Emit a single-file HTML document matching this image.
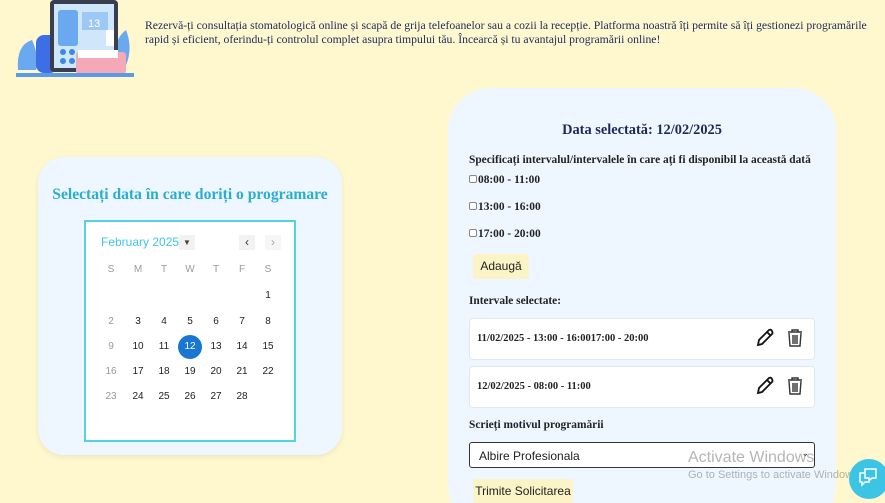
<!DOCTYPE html>
<html style="overflow:hidden;width:885px;height:503px"><head><meta charset="utf-8"><style>
*{box-sizing:border-box;margin:0;padding:0}
body{width:885px;height:503px;overflow:hidden;background:#fff8cf;font-family:"Liberation Serif",serif;position:relative;color:#222}
.abs{position:absolute}
.intro{left:145px;top:19px;width:738px;font-size:11.7px;color:#1c2a5a;line-height:14px}
.lcard{left:38px;top:157px;width:304px;height:298px;background:#eef6ff;border-radius:26px;box-shadow:0 2px 6px rgba(0,0,0,.08)}
.ltitle{left:38px;top:186px;width:304px;text-align:center;font-weight:bold;font-size:15.6px;color:#2aaed0}
.cal{left:84px;top:220px;width:212px;height:222px;background:#fff;border:2px solid #56d0e6;font-family:"Liberation Sans",sans-serif}
.d{position:absolute;width:24px;height:24px;margin-left:-12px;margin-top:-12px;text-align:center;line-height:24px;font-size:10px;color:#222;font-family:"Liberation Sans",sans-serif}
.g{color:#999}
.rcard{left:448px;top:88px;width:388px;height:440px;background:#eef6ff;border-radius:42px}
.b{font-weight:bold}
.item{left:469px;width:346px;height:42px;background:#fff;border:1px solid #e3e8ee;border-radius:4px;font-size:10.5px;font-weight:bold}
.btn{background:#fbf4c6;font-family:"Liberation Sans",sans-serif;font-size:12px;color:#222;text-align:center;border-radius:3px}
.cb{display:inline-block;width:8px;height:8px;border:1px solid #888;border-radius:2px;background:#fff;margin-right:1px;vertical-align:0}
.lab{left:469px;font-size:11.4px;font-weight:bold}
</style></head><body>
<svg class="abs" style="left:14px;top:0" width="122" height="80" viewBox="0 0 122 80">
<path d="M4 70 Q2 45 18 40 Q25 55 22 70Z" fill="#6aa8f0"/>
<path d="M100 70 Q98 40 112 30 Q120 50 110 70Z" fill="#6aa8f0"/>
<rect x="22" y="35" width="22" height="38" rx="8" fill="#3d6ee6"/>
<rect x="36" y="0" width="68" height="72" rx="4" fill="#3a3f4f"/>
<rect x="40" y="4" width="60" height="64" fill="#cfe6fb"/>
<rect x="44" y="10" width="20" height="36" rx="3" fill="#6aa8f0"/>
<rect x="68" y="12" width="26" height="18" fill="#9cc8f5"/>
<text x="74" y="27" font-size="11" fill="#fff" font-family="Liberation Sans">13</text>
<circle cx="49" cy="52" r="3" fill="#3d88e6"/><circle cx="58" cy="52" r="3" fill="#3d88e6"/>
<circle cx="49" cy="61" r="3" fill="#3d88e6"/><circle cx="58" cy="61" r="3" fill="#3d88e6"/>
<rect x="62" y="52" width="50" height="22" rx="3" fill="#f5a9b8"/>
<rect x="64" y="50" width="40" height="8" fill="#fff"/>
<rect x="92" y="30" width="8" height="16" fill="#fff"/>
<rect x="2" y="73" width="118" height="4" fill="#5b9be6"/>
</svg>
<div class="abs intro">Rezervă-ți consultația stomatologică online și scapă de grija telefoanelor sau a cozii la recepție. Platforma noastră îți permite să îți gestionezi programările rapid și eficient, oferindu-ți controlul complet asupra timpului tău. Încearcă și tu avantajul programării online!</div>

<div class="abs lcard"></div>
<div class="abs ltitle">Selectați data în care doriți o programare</div>
<div class="abs cal">
<div class="abs" style="left:15px;top:13px;font-size:12px;color:#40c4e8">February 2025</div>
<div class="abs" style="left:93px;top:13px;width:16px;height:15px;background:#f2f2f2;font-size:8px;text-align:center;line-height:15px;color:#444">▼</div>
<div class="abs" style="left:153px;top:13px;width:16px;height:15px;background:#f2f2f2;font-size:12px;text-align:center;line-height:14px;color:#333">‹</div>
<div class="abs" style="left:179px;top:13px;width:16px;height:15px;background:#f6f6f6;font-size:12px;text-align:center;line-height:14px;color:#aaa">›</div>
</div>
<div class="abs" style="left:0;top:0">
<div class="d g" style="left:111px;top:270px">S</div><div class="d g" style="left:138px;top:270px">M</div><div class="d g" style="left:164px;top:270px">T</div><div class="d g" style="left:190px;top:270px">W</div><div class="d g" style="left:216px;top:270px">T</div><div class="d g" style="left:242px;top:270px">F</div><div class="d g" style="left:268px;top:270px">S</div>
<div class="d" style="left:268px;top:296px">1</div>
<div class="d g" style="left:111px;top:322px">2</div><div class="d" style="left:138px;top:322px">3</div><div class="d" style="left:164px;top:322px">4</div><div class="d" style="left:190px;top:322px">5</div><div class="d" style="left:216px;top:322px">6</div><div class="d" style="left:242px;top:322px">7</div><div class="d" style="left:268px;top:322px">8</div>
<div class="d g" style="left:111px;top:347px">9</div><div class="d" style="left:138px;top:347px">10</div><div class="d" style="left:164px;top:347px">11</div><div class="d" style="left:190px;top:347px;background:#1976d2;color:#fff;border-radius:50%">12</div><div class="d" style="left:216px;top:347px">13</div><div class="d" style="left:242px;top:347px">14</div><div class="d" style="left:268px;top:347px">15</div>
<div class="d g" style="left:111px;top:372px">16</div><div class="d" style="left:138px;top:372px">17</div><div class="d" style="left:164px;top:372px">18</div><div class="d" style="left:190px;top:372px">19</div><div class="d" style="left:216px;top:372px">20</div><div class="d" style="left:242px;top:372px">21</div><div class="d" style="left:268px;top:372px">22</div>
<div class="d g" style="left:111px;top:397px">23</div><div class="d" style="left:138px;top:397px">24</div><div class="d" style="left:164px;top:397px">25</div><div class="d" style="left:190px;top:397px">26</div><div class="d" style="left:216px;top:397px">27</div><div class="d" style="left:242px;top:397px">28</div>
</div>

<div class="abs rcard"></div>
<div class="abs b" style="left:448px;top:122px;width:388px;text-align:center;font-size:14.4px;color:#1c2a5a">Data selectată: 12/02/2025</div>
<div class="abs lab" style="top:154px">Specificați intervalul/intervalele în care ați fi disponibil la această dată</div>
<div class="abs lab" style="top:174px"><span class="cb"></span>08:00 - 11:00</div>
<div class="abs lab" style="top:201px"><span class="cb"></span>13:00 - 16:00</div>
<div class="abs lab" style="top:228px"><span class="cb"></span>17:00 - 20:00</div>
<div class="abs btn" style="left:473px;top:254px;width:56px;height:25px;line-height:25px">Adaugă</div>
<div class="abs lab" style="top:295px">Intervale selectate:</div>
<div class="abs item" style="top:318px"><span class="abs" style="left:7px;top:14px">11/02/2025 - 13:00 - 16:0017:00 - 20:00</span></div>
<div class="abs item" style="top:366px"><span class="abs" style="left:7px;top:14px">12/02/2025 - 08:00 - 11:00</span></div>
<svg class="abs" style="left:755px;top:328px" width="50" height="20" viewBox="0 0 50 20"><path d="M3 17 L4 12 L14 2 Q16 1 17 3 Q18 5 17 6 L7 16Z M12 4 L16 8" fill="none" stroke="#111" stroke-width="1.8"/><path d="M33 4 H47 M37 4 V2 H43 V4 M34 5 L35 18 H45 L46 5 M38 7 V16 M40 7 V16 M42 7 V16" fill="none" stroke="#333" stroke-width="1.4"/></svg>
<svg class="abs" style="left:755px;top:376px" width="50" height="20" viewBox="0 0 50 20"><path d="M3 17 L4 12 L14 2 Q16 1 17 3 Q18 5 17 6 L7 16Z M12 4 L16 8" fill="none" stroke="#111" stroke-width="1.8"/><path d="M33 4 H47 M37 4 V2 H43 V4 M34 5 L35 18 H45 L46 5 M38 7 V16 M40 7 V16 M42 7 V16" fill="none" stroke="#333" stroke-width="1.4"/></svg>
<div class="abs lab" style="top:419px">Scrieți motivul programării</div>
<div class="abs" style="left:469px;top:442px;width:346px;height:26px;background:#fff;border:1.5px solid #333;border-radius:3px;font-family:'Liberation Sans',sans-serif;font-size:12px;padding:6px 9px">Albire Profesionala<span class="abs" style="right:5px;top:5px;font-size:9px">⌄</span></div>
<div class="abs" style="left:688px;top:449px;font-family:'Liberation Sans',sans-serif;font-size:16px;color:rgba(120,120,120,.55)">Activate Windows</div>
<div class="abs" style="left:688px;top:469px;font-family:'Liberation Sans',sans-serif;font-size:11px;color:rgba(120,120,120,.55)">Go to Settings to activate Windows.</div>
<div class="abs btn" style="left:473px;top:479px;width:100px;height:24px;line-height:24px">Trimite Solicitarea</div>
<div class="abs" style="left:849px;top:459px;width:40px;height:40px;border-radius:50%;background:#3cc4e4"></div>
<svg class="abs" style="left:857px;top:466px" width="22" height="22" viewBox="0 0 22 22"><path d="M8 3 H19 V12 H15 L12 15 V12 H8Z M8 7 H3 V16 H5 V19 L8 16 H12 V14" fill="none" stroke="#fff" stroke-width="1.5"/></svg>
</body></html>
